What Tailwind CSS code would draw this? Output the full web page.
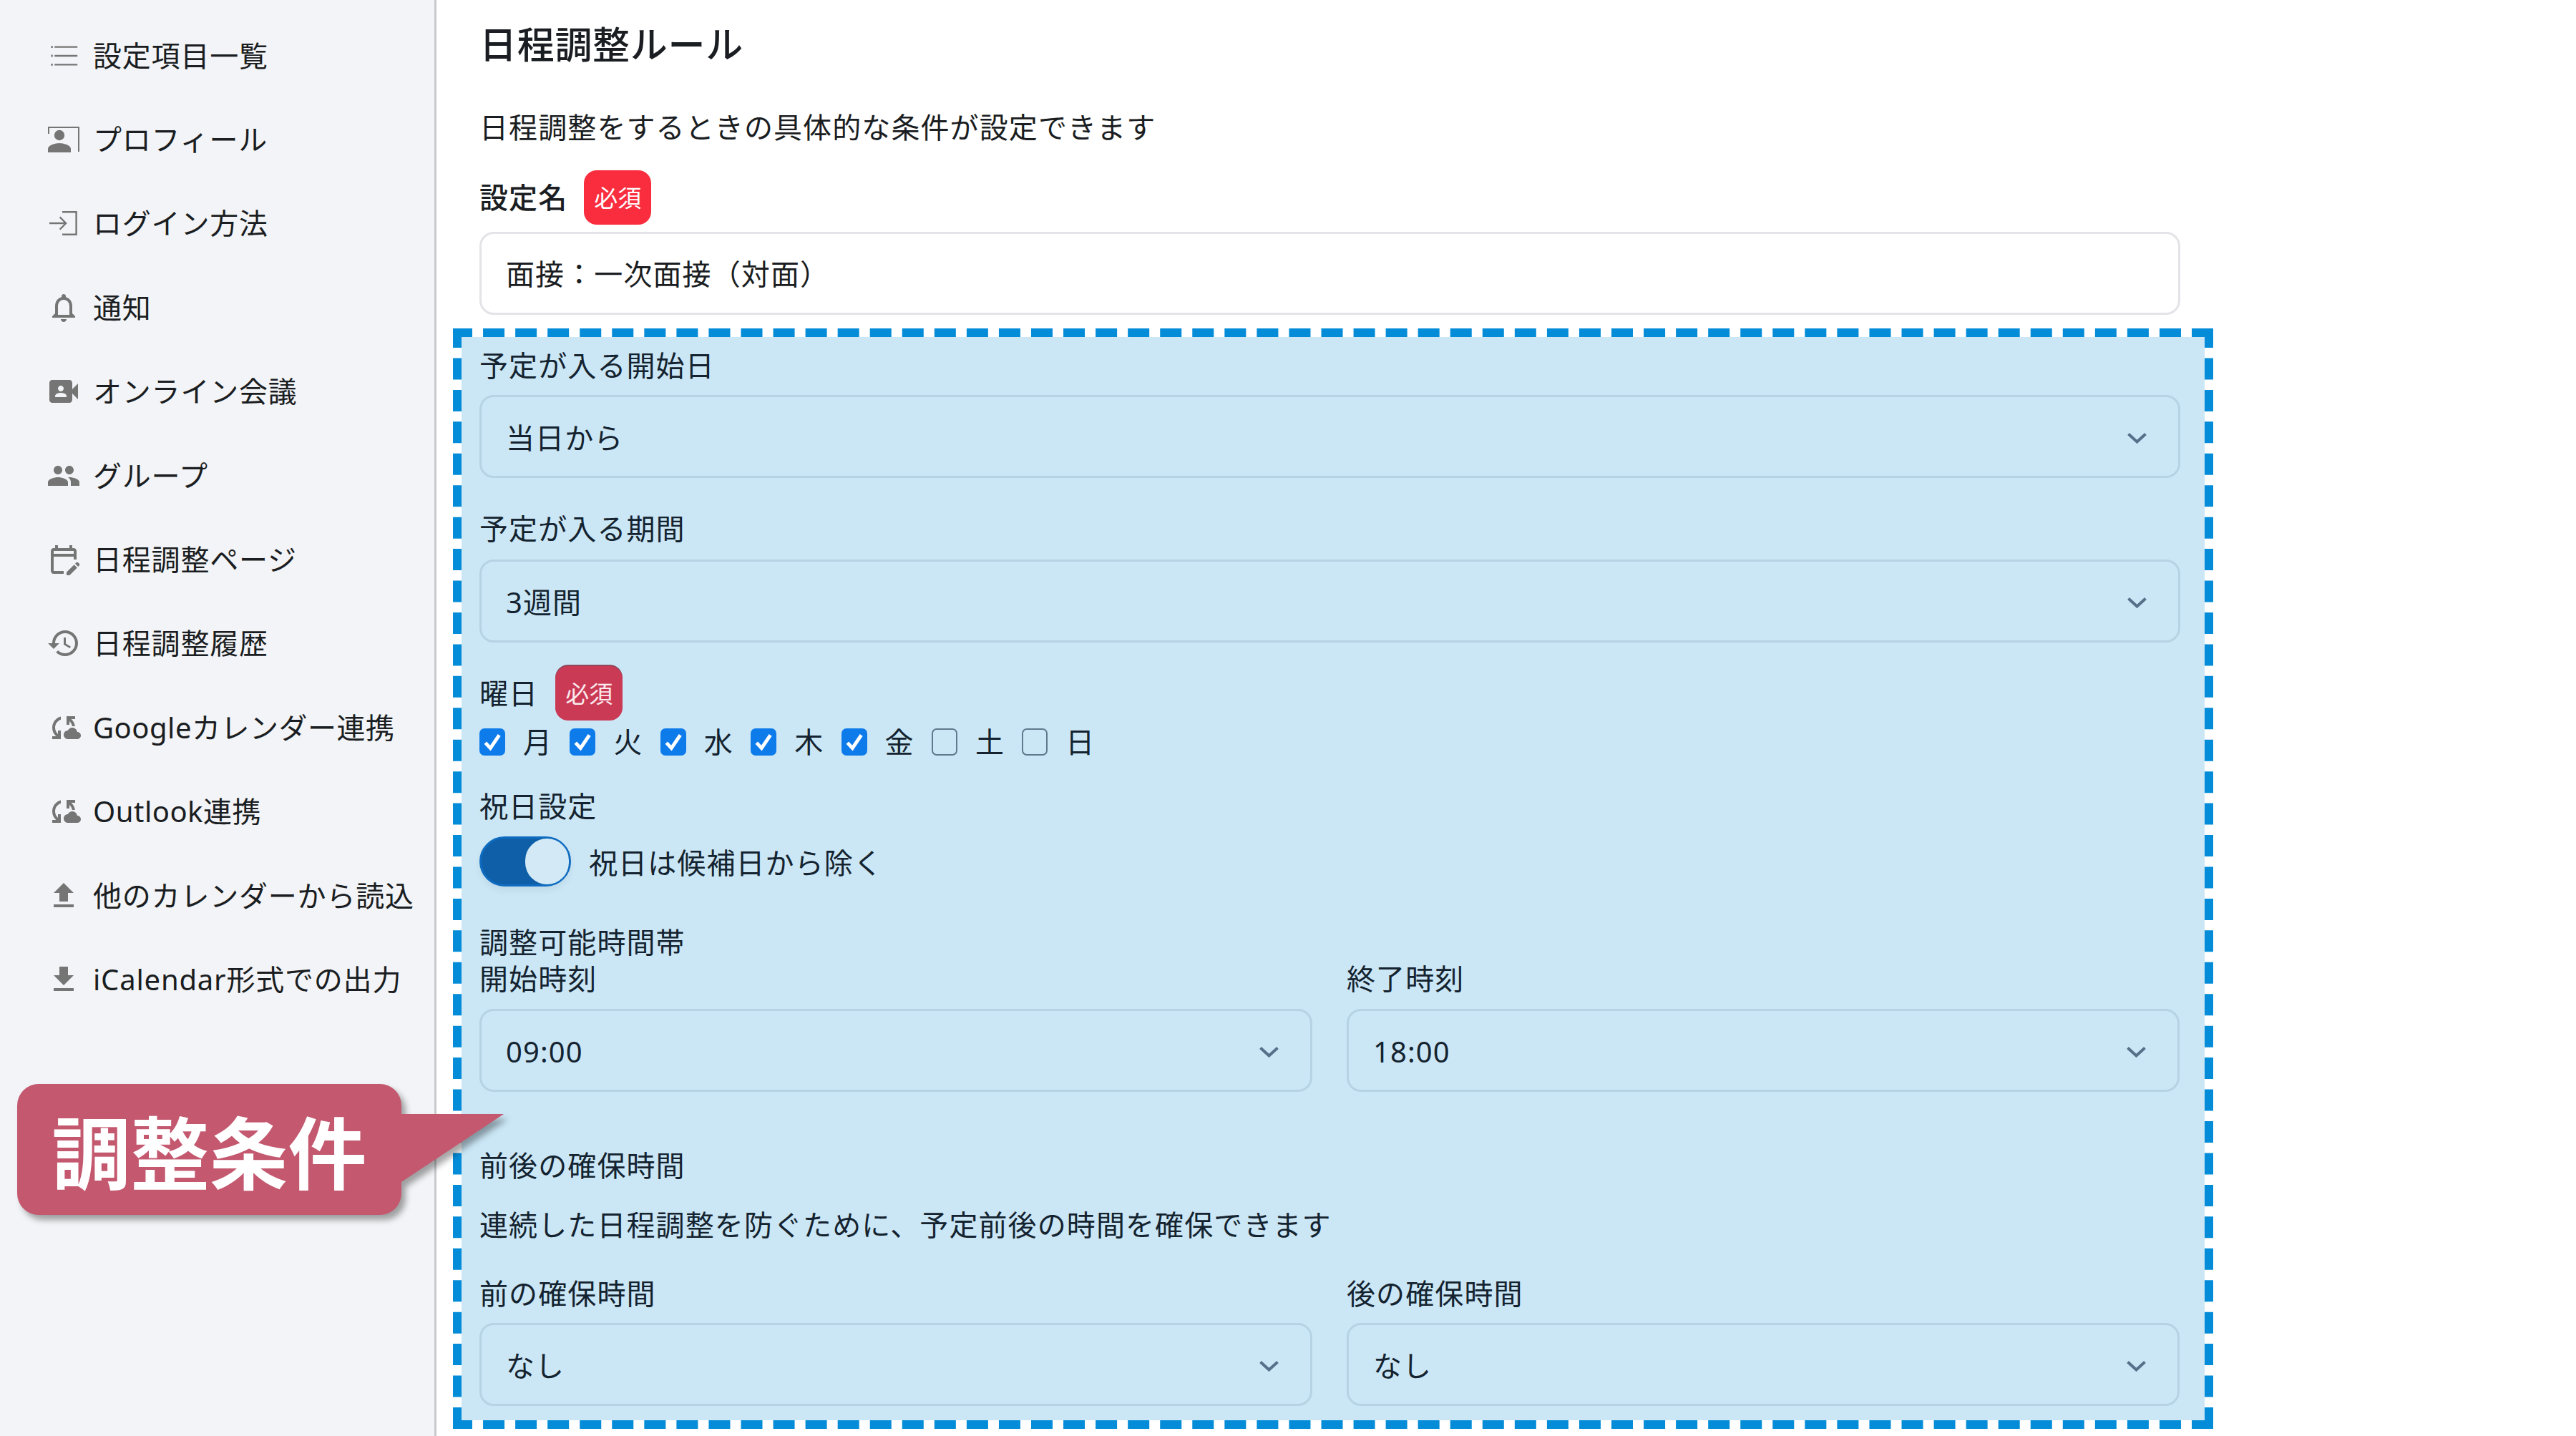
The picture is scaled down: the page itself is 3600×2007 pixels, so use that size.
<!DOCTYPE html>
<html lang="ja">
<head>
    <meta charset="UTF-8">
    <meta name="viewport" content="width=device-width, initial-scale=1.0">
    <title>日程調整ルール</title>
    <script src="https://cdn.jsdelivr.net/npm/@tailwindcss/browser@4"></script>
</head>
<body class="bg-white">
<div class="relative flex w-[3600px] h-[2007px] overflow-hidden bg-white text-[40px] tracking-[1.1px] text-[#1a1d21] font-['Noto_Sans','Noto_Sans_CJK_JP',sans-serif]">

    <!-- sidebar -->
    <aside class="w-[610px] shrink-0 h-full bg-[#f3f4f7] border-r-[3px] border-[#c9cacd] pt-[19px] tracking-[0.8px]">
        <a class="flex items-center h-[117.4px] pl-[65px] gap-[17px]">
            <svg class="w-[48px] h-[48px] fill-[#757575]" viewBox="0 0 24 24"><path d="M3.2 5.1h1.2v1.4h-1.2zM3.2 11.3h1.2v1.4h-1.2zM3.2 17.5h1.2v1.4h-1.2zM5.6 5.2h16v1.2h-16zM5.6 11.4h16v1.2h-16zM5.6 17.6h16v1.2h-16z"/></svg>
            <span>設定項目一覧</span>
        </a>
        <a class="flex items-center h-[117.4px] pl-[65px] gap-[17px]">
            <svg class="w-[48px] h-[48px] fill-[#757575]" viewBox="0 0 24 24"><path d="M1 3h22v17.5h-1V4H2v4H1z"/><circle cx="9" cy="9" r="3.6"/><path d="M1 21v-2.5c0-2.6 5.3-4 8-4s8 1.4 8 4V21z"/></svg>
            <span>プロフィール</span>
        </a>
        <a class="flex items-center h-[117.4px] pl-[65px] gap-[17px]">
            <svg class="w-[48px] h-[48px] fill-[#757575]" viewBox="0 0 24 24"><path d="M11 3.5h10.4v17H11v-1.2h9.2V4.7H11zM2 11.4h10.2L8.9 8.1l.8-.8 4.7 4.7-4.7 4.7-.8-.8 3.3-3.3H2z"/></svg>
            <span>ログイン方法</span>
        </a>
        <a class="flex items-center h-[117.4px] pl-[65px] gap-[17px]">
            <svg class="w-[48px] h-[48px] fill-[#757575]" viewBox="0 0 24 24"><path d="M12 22c1.1 0 2-.9 2-2h-4c0 1.1.9 2 2 2zm6-6v-5c0-3.07-1.63-5.64-4.5-6.32V4c0-.83-.67-1.5-1.5-1.5s-1.5.67-1.5 1.5v.68C7.64 5.36 6 7.92 6 11v5l-2 2v1h16v-1l-2-2zm-2 1H8v-6c0-2.48 1.51-4.5 4-4.5s4 2.02 4 4.5v6z"/></svg>
            <span>通知</span>
        </a>
        <a class="flex items-center h-[117.4px] pl-[65px] gap-[17px]">
            <svg class="w-[48px] h-[48px] fill-[#757575]" viewBox="0 0 24 24"><path d="M18 10.48V6c0-1.1-.9-2-2-2H4c-1.1 0-2 .9-2 2v12c0 1.1.9 2 2 2h12c1.1 0 2-.9 2-2v-4.48l4 3.98v-11l-4 3.98zM10 8c1.1 0 2 .9 2 2s-.9 2-2 2-2-.9-2-2 .9-2 2-2zm4 8H6v-.57c0-.81.48-1.53 1.22-1.85.85-.37 1.79-.58 2.78-.58.99 0 1.93.21 2.78.58.74.32 1.22 1.04 1.22 1.85V16z"/></svg>
            <span>オンライン会議</span>
        </a>
        <a class="flex items-center h-[117.4px] pl-[65px] gap-[17px]">
            <svg class="w-[48px] h-[48px] fill-[#757575]" viewBox="0 0 24 24"><path d="M16 11c1.66 0 2.99-1.34 2.99-3S17.66 5 16 5c-1.66 0-3 1.34-3 3s1.34 3 3 3zm-8 0c1.66 0 2.99-1.34 2.99-3S9.66 5 8 5C6.34 5 5 6.34 5 8s1.34 3 3 3zm0 2c-2.33 0-7 1.17-7 3.5V19h14v-2.5c0-2.33-4.67-3.5-7-3.5zm8 0c-.29 0-.62.02-.97.05 1.16.84 1.97 1.97 1.97 3.45V19h6v-2.5c0-2.33-4.67-3.5-7-3.5z"/></svg>
            <span>グループ</span>
        </a>
        <a class="flex items-center h-[117.4px] pl-[65px] gap-[17px]">
            <svg class="w-[48px] h-[48px] fill-[#757575]" viewBox="0 0 24 24"><path d="M5 10h14v2h2V6c0-1.1-.9-2-2-2h-1V2h-2v2H8V2H6v2H5c-1.11 0-1.99.9-1.99 2L3 20c0 1.1.89 2 2 2h7v-2H5V10zm0-4h14v2H5V6zm17.84 10.28-.71.71-2.12-2.12.71-.71c.39-.39 1.02-.39 1.41 0l.71.71c.39.39.39 1.02 0 1.41zm-3.54-.7 2.12 2.12-5.3 5.3H14v-2.12l5.3-5.3z"/></svg>
            <span>日程調整ページ</span>
        </a>
        <a class="flex items-center h-[117.4px] pl-[65px] gap-[17px]">
            <svg class="w-[48px] h-[48px] fill-[#757575]" viewBox="0 0 24 24"><path d="M13 3c-4.97 0-9 4.03-9 9H1l3.89 3.89.07.14L9 12H6c0-3.87 3.13-7 7-7s7 3.13 7 7-3.13 7-7 7c-1.93 0-3.68-.79-4.94-2.06l-1.42 1.42C8.27 19.99 10.51 21 13 21c4.97 0 9-4.03 9-9s-4.03-9-9-9zm-1 5v5l4.28 2.54.72-1.21-3.5-2.08V8H12z"/></svg>
            <span>日程調整履歴</span>
        </a>
        <a class="flex items-center h-[117.4px] pl-[65px] gap-[17px]">
            <svg class="w-[48px] h-[48px] fill-[#757575]" viewBox="0 0 24 24"><path d="M21.5 14.98c-.02 0-.03 0-.05.01C21.2 13.3 19.76 12 18 12c-1.4 0-2.6.83-3.16 2.02C13.26 14.1 12 15.4 12 17c0 1.66 1.34 3 3 3l6.5-.02c1.38 0 2.5-1.12 2.5-2.5s-1.12-2.5-2.5-2.5zM10 4.26v2.09C7.67 7.18 6 9.39 6 12c0 1.77.78 3.34 2 4.44V14h2v6H4v-2h2.73C5.06 16.54 4 14.4 4 12c0-3.73 2.55-6.85 6-7.74zM20 6h-2.73c1.43 1.26 2.41 3.01 2.66 5h-2.02c-.23-1.36-.93-2.55-1.91-3.44V10h-2V4h6v2z"/></svg>
            <span class="tracking-[0.5px]">Googleカレンダー連携</span>
        </a>
        <a class="flex items-center h-[117.4px] pl-[65px] gap-[17px]">
            <svg class="w-[48px] h-[48px] fill-[#757575]" viewBox="0 0 24 24"><path d="M21.5 14.98c-.02 0-.03 0-.05.01C21.2 13.3 19.76 12 18 12c-1.4 0-2.6.83-3.16 2.02C13.26 14.1 12 15.4 12 17c0 1.66 1.34 3 3 3l6.5-.02c1.38 0 2.5-1.12 2.5-2.5s-1.12-2.5-2.5-2.5zM10 4.26v2.09C7.67 7.18 6 9.39 6 12c0 1.77.78 3.34 2 4.44V14h2v6H4v-2h2.73C5.06 16.54 4 14.4 4 12c0-3.73 2.55-6.85 6-7.74zM20 6h-2.73c1.43 1.26 2.41 3.01 2.66 5h-2.02c-.23-1.36-.93-2.55-1.91-3.44V10h-2V4h6v2z"/></svg>
            <span class="tracking-[0.5px]">Outlook連携</span>
        </a>
        <a class="flex items-center h-[117.4px] pl-[65px] gap-[17px]">
            <svg class="w-[48px] h-[48px] fill-[#757575]" viewBox="0 0 24 24"><path d="M9 16h6v-6h4l-7-7-7 7h4zm-4 2h14v2H5z"/></svg>
            <span>他のカレンダーから読込</span>
        </a>
        <a class="flex items-center h-[117.4px] pl-[65px] gap-[17px]">
            <svg class="w-[48px] h-[48px] fill-[#757575]" viewBox="0 0 24 24"><path d="M19 9h-4V3H9v6H5l7 7 7-7zM5 18v2h14v-2H5z"/></svg>
            <span>iCalendar形式での出力</span>
        </a>
    </aside>

    <!-- form -->
    <main class="w-[2377px] ml-[60px]">
        <h1 class="mt-[32px] text-[52px] leading-[60px] tracking-[0.7px] font-medium">日程調整ルール</h1>
        <p class="mt-[58px] leading-[56px]">日程調整をするときの具体的な条件が設定できます</p>
        <div class="mt-[32px] flex items-center gap-[23px]">
            <label class="font-medium">設定名</label>
            <span class="w-[94px] h-[76px] rounded-[18px] bg-[#f92d3e] text-white text-[33px] tracking-normal pt-[2px] flex items-center justify-center">必須</span>
        </div>
        <div class="mt-[10px] h-[116px] pl-[34px] pt-[2px] flex items-center bg-white border-[3px] border-[#e3e3e8] rounded-[20px]">面接：一次面接（対面）</div>

        <!-- highlighted block, dashes drawn by the svg -->
        <section class="relative mt-[19px] -ml-[37px] w-[2460px] h-[1538px] p-[12px]">
            <svg class="absolute left-0 top-0 w-[2460px] h-[1538px]" viewBox="0 0 2460 1538" fill="none" stroke="#048cd8" stroke-width="12">
                <line x1="0" y1="6" x2="2460" y2="6" stroke-dasharray="30 15.056" stroke-dashoffset="3"/>
                <line x1="0" y1="1532" x2="2460" y2="1532" stroke-dasharray="30 15.056" stroke-dashoffset="3"/>
                <line x1="6" y1="0" x2="6" y2="1538" stroke-dasharray="30 14.44" stroke-dashoffset="3"/>
                <line x1="2454" y1="0" x2="2454" y2="1538" stroke-dasharray="30 14.44" stroke-dashoffset="3"/>
            </svg>
            <div class="h-full bg-[#cbe7f6] pl-[25px] pr-[34px] pt-[12px] text-[#14232f]">
                <label class="block leading-[56px]">予定が入る開始日</label>
                <div class="mt-[13px] h-[116px] pl-[34px] pr-[44px] pt-[4px] flex items-center justify-between border-[3px] border-[#b6d3e3] rounded-[20px]">
                    <span>当日から</span>
                    <svg class="w-[27px] h-[15px]" viewBox="0 0 27 15" fill="none" stroke="#56708a" stroke-width="4"><path d="M1.5 1.5 13.5 12.5 25.5 1.5"/></svg>
                </div>

                <label class="block mt-[43px] leading-[56px]">予定が入る期間</label>
                <div class="mt-[15px] h-[116px] pl-[34px] pr-[44px] pt-[4px] flex items-center justify-between border-[3px] border-[#b6d3e3] rounded-[20px]">
                    <span>3週間</span>
                    <svg class="w-[27px] h-[15px]" viewBox="0 0 27 15" fill="none" stroke="#56708a" stroke-width="4"><path d="M1.5 1.5 13.5 12.5 25.5 1.5"/></svg>
                </div>

                <div class="mt-[33px] flex items-center gap-[24px]">
                    <label>曜日</label>
                    <span class="w-[94px] h-[76px] rounded-[18px] bg-[#cb3a55] text-white/90 text-[33px] tracking-normal pt-[2px] flex items-center justify-center shadow-[0_-2px_0_#8d4a5c]">必須</span>
                </div>
                <div class="mt-[10px] h-[39px] flex items-center">
                    <span class="w-[36px] h-[38px] rounded-[7px] bg-[#0d7bea] flex items-center justify-center"><svg class="w-[28px] h-[30px]" viewBox="0 0 26 26" fill="none" stroke="white" stroke-width="4.5"><path d="M4 14 10.5 21 22 4"/></svg></span>
                    <span class="w-[90.4px] pl-[25px]">月</span>
                    <span class="w-[36px] h-[38px] rounded-[7px] bg-[#0d7bea] flex items-center justify-center"><svg class="w-[28px] h-[30px]" viewBox="0 0 26 26" fill="none" stroke="white" stroke-width="4.5"><path d="M4 14 10.5 21 22 4"/></svg></span>
                    <span class="w-[90.4px] pl-[25px]">火</span>
                    <span class="w-[36px] h-[38px] rounded-[7px] bg-[#0d7bea] flex items-center justify-center"><svg class="w-[28px] h-[30px]" viewBox="0 0 26 26" fill="none" stroke="white" stroke-width="4.5"><path d="M4 14 10.5 21 22 4"/></svg></span>
                    <span class="w-[90.4px] pl-[25px]">水</span>
                    <span class="w-[36px] h-[38px] rounded-[7px] bg-[#0d7bea] flex items-center justify-center"><svg class="w-[28px] h-[30px]" viewBox="0 0 26 26" fill="none" stroke="white" stroke-width="4.5"><path d="M4 14 10.5 21 22 4"/></svg></span>
                    <span class="w-[90.4px] pl-[25px]">木</span>
                    <span class="w-[36px] h-[38px] rounded-[7px] bg-[#0d7bea] flex items-center justify-center"><svg class="w-[28px] h-[30px]" viewBox="0 0 26 26" fill="none" stroke="white" stroke-width="4.5"><path d="M4 14 10.5 21 22 4"/></svg></span>
                    <span class="w-[90.4px] pl-[25px]">金</span>
                    <span class="w-[36px] h-[38px] rounded-[7px] border-[2px] border-[#607a8c]"></span>
                    <span class="w-[90.4px] pl-[25px]">土</span>
                    <span class="w-[36px] h-[38px] rounded-[7px] border-[2px] border-[#607a8c]"></span>
                    <span class="w-[90.4px] pl-[25px]">日</span>
                </div>

                <label class="block mt-[43px] leading-[56px]">祝日設定</label>
                <div class="mt-[14px] flex items-center gap-[25px]">
                    <span class="w-[128px] h-[70px] rounded-full bg-[#0f5fa8] border-[3px] border-[#0f6cc0] flex justify-end shadow-[0_6px_10px_rgba(0,0,0,0.06)]">
                        <span class="w-[61px] h-full rounded-full bg-[#d3eaf6]"></span>
                    </span>
                    <span class="pt-[3px]">祝日は候補日から除く</span>
                </div>

                <label class="block mt-[53px] leading-[50px]">調整可能時間帯</label>
                <div class="mt-[1px] grid grid-cols-[1164px_1164px] gap-x-[48px]">
                    <div>
                        <label class="block leading-[50px]">開始時刻</label>
                        <div class="mt-[17px] h-[116px] pl-[34px] pr-[44px] pt-[4px] flex items-center justify-between border-[3px] border-[#b6d3e3] rounded-[20px]">
                            <span>09:00</span>
                            <svg class="w-[27px] h-[15px]" viewBox="0 0 27 15" fill="none" stroke="#56708a" stroke-width="4"><path d="M1.5 1.5 13.5 12.5 25.5 1.5"/></svg>
                        </div>
                    </div>
                    <div>
                        <label class="block leading-[50px]">終了時刻</label>
                        <div class="mt-[17px] h-[116px] pl-[34px] pr-[44px] pt-[4px] flex items-center justify-between border-[3px] border-[#b6d3e3] rounded-[20px]">
                            <span>18:00</span>
                            <svg class="w-[27px] h-[15px]" viewBox="0 0 27 15" fill="none" stroke="#56708a" stroke-width="4"><path d="M1.5 1.5 13.5 12.5 25.5 1.5"/></svg>
                        </div>
                    </div>
                </div>

                <label class="block mt-[75px] leading-[56px]">前後の確保時間</label>
                <p class="mt-[27px] leading-[56px]">連続した日程調整を防ぐために、予定前後の時間を確保できます</p>
                <div class="mt-[40px] grid grid-cols-[1164px_1164px] gap-x-[48px]">
                    <div>
                        <label class="block leading-[56px]">前の確保時間</label>
                        <div class="mt-[13px] h-[116px] pl-[34px] pr-[44px] pt-[4px] flex items-center justify-between border-[3px] border-[#b6d3e3] rounded-[20px]">
                            <span>なし</span>
                            <svg class="w-[27px] h-[15px]" viewBox="0 0 27 15" fill="none" stroke="#56708a" stroke-width="4"><path d="M1.5 1.5 13.5 12.5 25.5 1.5"/></svg>
                        </div>
                    </div>
                    <div>
                        <label class="block leading-[56px]">後の確保時間</label>
                        <div class="mt-[13px] h-[116px] pl-[34px] pr-[44px] pt-[4px] flex items-center justify-between border-[3px] border-[#b6d3e3] rounded-[20px]">
                            <span>なし</span>
                            <svg class="w-[27px] h-[15px]" viewBox="0 0 27 15" fill="none" stroke="#56708a" stroke-width="4"><path d="M1.5 1.5 13.5 12.5 25.5 1.5"/></svg>
                        </div>
                    </div>
                </div>
            </div>
        </section>
    </main>

    <!-- callout over the page -->
    <svg class="absolute left-0 top-[1500px] w-[720px] h-[220px] drop-shadow-[6px_7px_4px_rgba(0,0,0,0.35)]" viewBox="0 1500 720 220" fill="#c3586f">
        <path d="M54 1515H531a30 30 0 0 1 30 30V1557H704L561 1652V1668a30 30 0 0 1-30 30H54a30 30 0 0 1-30-30V1545a30 30 0 0 1 30-30Z"/>
    </svg>
    <div class="absolute left-[24px] top-[1515px] w-[537px] h-[183px] pt-[8px] flex items-center justify-center text-[110px] leading-none tracking-normal font-bold text-white">調整条件</div>
</div>
</body>
</html>
